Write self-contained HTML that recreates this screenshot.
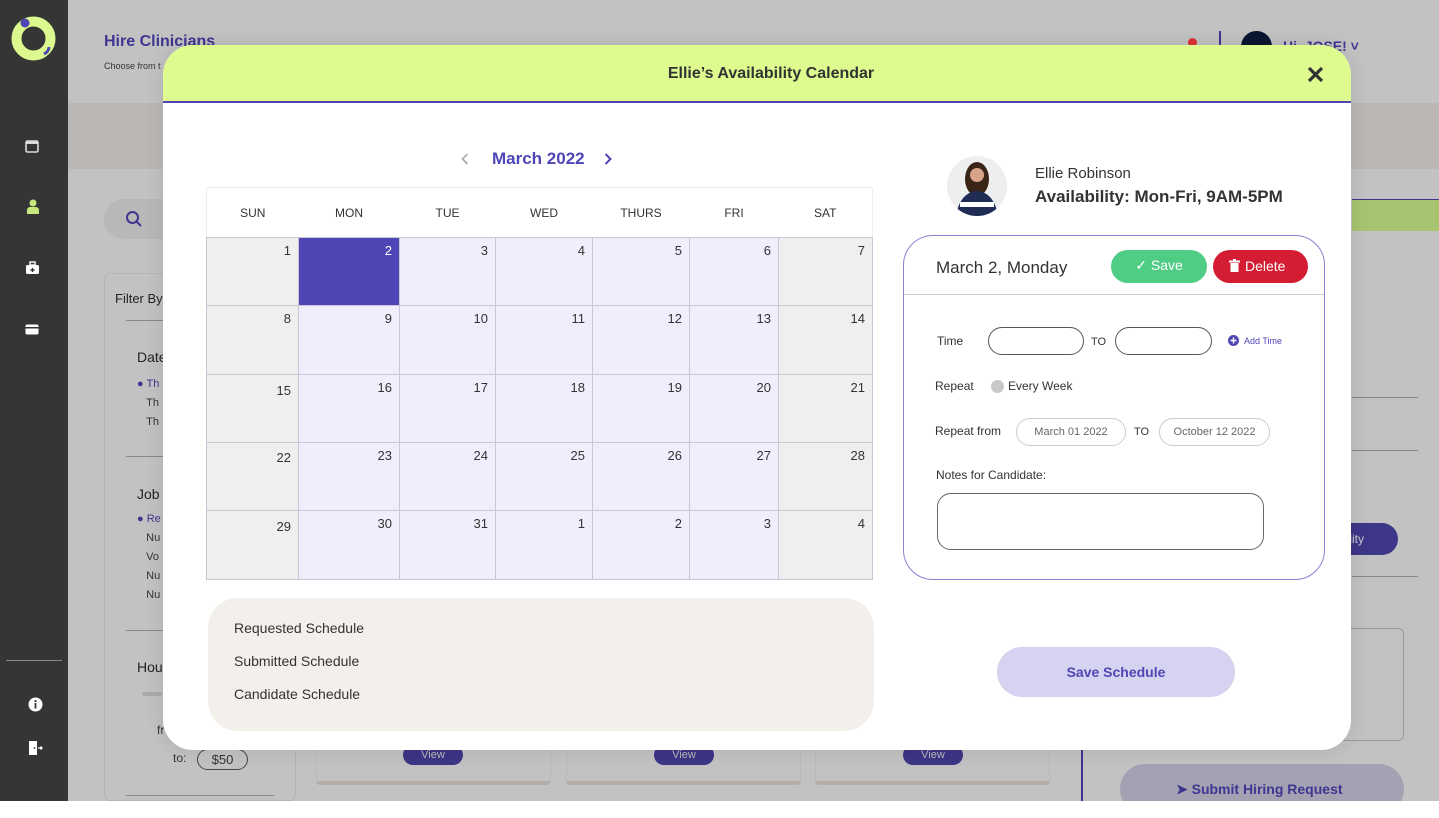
<!DOCTYPE html>
<html><head><meta charset="utf-8"><style>
*{margin:0;padding:0;box-sizing:border-box}
body{width:1439px;height:818px;background:#fff;font-family:"Liberation Sans",sans-serif;position:relative;overflow:hidden;color:#333}
.a{position:absolute}
.bg{left:68px;top:0;width:1371px;height:801px;background:#c2c2c2}
.side{left:0;top:0;width:68px;height:801px;background:#353535}
.cal td{border:1px solid #c9c6d6;vertical-align:top;text-align:right;padding:5px 7px 0 0;font-size:13px;color:#333}
.cal th{font-weight:normal;font-size:12px;color:#333;height:50px;background:#fff}
.g{background:#efefef}.l{background:#f0edfc}
.lbl{font-size:12px;color:#333}
.pill{border:1px solid #555;border-radius:14px;height:28px}
.dp{border:1px solid #ccc;border-radius:14px;height:28px;font-size:11px;color:#666;text-align:center;line-height:26px}
</style></head><body>
<div class="a bg"></div>
<div class="a" style="left:68px;top:103px;width:1371px;height:66px;background:#bbb7b4"></div>
<div class="a" style="left:104px;top:33px;font-size:16px;font-weight:bold;color:#3e3690">Hire Clinicians</div>
<div class="a" style="left:104px;top:61px;font-size:9px;color:#333">Choose from t</div>
<div class="a" style="left:104px;top:199px;width:120px;height:40px;border-radius:20px;background:#b8b8b8"></div>
<svg class="a" style="left:125px;top:210px" width="18" height="18" viewBox="0 0 18 18"><circle cx="7.5" cy="7.5" r="5.5" fill="none" stroke="#3e3690" stroke-width="2"/><path d="M11.5 11.5L16 16" stroke="#3e3690" stroke-width="2"/></svg>
<div class="a" style="left:104px;top:273px;width:192px;height:528px;border:1px solid #b5b5b5;border-radius:6px"></div>
<div class="a" style="left:115px;top:291px;font-size:13px;color:#222">Filter By</div>
<div class="a" style="left:126px;top:320px;width:40px;border-top:1px solid #888"></div>
<div class="a" style="left:137px;top:349px;font-size:14px;color:#222">Date</div>
<div class="a" style="left:137px;top:375px;font-size:11px;color:#3e3690;line-height:19px">● Th<br><span style="color:#333">&nbsp;&nbsp;&nbsp;Th<br>&nbsp;&nbsp;&nbsp;Th</span></div>
<div class="a" style="left:126px;top:456px;width:40px;border-top:1px solid #888"></div>
<div class="a" style="left:137px;top:486px;font-size:14px;color:#222">Job</div>
<div class="a" style="left:137px;top:510px;font-size:11px;color:#3e3690;line-height:19px">● Re<br><span style="color:#333">&nbsp;&nbsp;&nbsp;Nu<br>&nbsp;&nbsp;&nbsp;Vo<br>&nbsp;&nbsp;&nbsp;Nu<br>&nbsp;&nbsp;&nbsp;Nu</span></div>
<div class="a" style="left:126px;top:630px;width:40px;border-top:1px solid #888"></div>
<div class="a" style="left:137px;top:659px;font-size:14px;color:#222">Hou</div>
<div class="a" style="left:142px;top:692px;width:20px;height:4px;border-radius:2px;background:#aaa"></div>
<div class="a" style="left:157px;top:723px;font-size:12px">fr</div>
<div class="a" style="left:173px;top:751px;font-size:12px">to:</div>
<div class="a" style="left:197px;top:749px;width:51px;height:21px;border:1px solid #444;border-radius:11px;font-size:13px;text-align:center;line-height:19px">$50</div>
<div class="a" style="left:126px;top:795px;width:148px;border-top:1px solid #888"></div>
<div class="a" style="left:316px;top:740px;width:235px;height:45px;border:1px solid #b8b8b8;border-radius:4px;border-bottom:4px solid #b4aeab"></div>
<div class="a" style="left:566px;top:740px;width:235px;height:45px;border:1px solid #b8b8b8;border-radius:4px;border-bottom:4px solid #b4aeab"></div>
<div class="a" style="left:815px;top:740px;width:235px;height:45px;border:1px solid #b8b8b8;border-radius:4px;border-bottom:4px solid #b4aeab"></div>
<div class="a" style="left:403px;top:745px;width:60px;height:20px;background:#3d3586;border-radius:10px;color:#bbb;font-size:11px;text-align:center;line-height:20px">View</div>
<div class="a" style="left:654px;top:745px;width:60px;height:20px;background:#3d3586;border-radius:10px;color:#bbb;font-size:11px;text-align:center;line-height:20px">View</div>
<div class="a" style="left:903px;top:745px;width:60px;height:20px;background:#3d3586;border-radius:10px;color:#bbb;font-size:11px;text-align:center;line-height:20px">View</div>
<div class="a" style="left:1081px;top:750px;width:2px;height:51px;background:#3e3690"></div>
<div class="a" style="left:1120px;top:764px;width:284px;height:50px;border-radius:25px;background:#a4a1b3"></div>
<div class="a" style="left:1176px;top:781px;font-size:14px;font-weight:bold;color:#3e3690">➤ Submit Hiring Request</div>
<div class="a" style="left:0;top:801px;width:1439px;height:17px;background:#fff"></div>
<div class="a" style="left:1352px;top:199px;width:87px;height:32px;background:#a6c46f;border-top:1px solid #3e3690"></div>
<div class="a" style="left:1352px;top:397px;width:66px;border-top:1px solid #888"></div>
<div class="a" style="left:1352px;top:450px;width:66px;border-top:1px solid #888"></div>
<div class="a" style="left:1352px;top:576px;width:66px;border-top:1px solid #888"></div>
<div class="a" style="left:1300px;top:523px;width:98px;height:32px;border-radius:16px;background:#3e3688;color:#ccc;font-size:12px;line-height:32px;text-align:right;padding-right:34px">bility</div>
<div class="a" style="left:1340px;top:628px;width:64px;height:113px;border:1px solid #999;border-radius:6px"></div>
<div class="a" style="left:1188px;top:38px;width:9px;height:9px;border-radius:50%;background:#d33"></div>
<div class="a" style="left:1219px;top:31px;width:2px;height:16px;background:#3e3690"></div>
<div class="a" style="left:1241px;top:31px;width:31px;height:31px;border-radius:50%;background:#0a1530"></div>
<div class="a" style="left:1283px;top:38px;font-size:14px;color:#3e3690;font-weight:bold">Hi, JOSE! ˅</div>
<div class="a side"></div>
<svg class="a" style="left:10px;top:15px" width="47" height="47" viewBox="0 0 47 47"><circle cx="23.5" cy="23.5" r="17" fill="none" stroke="#dcf98f" stroke-width="10"/><circle cx="15" cy="8" r="4.5" fill="#4f46b5"/><path d="M39 32a8 8 0 0 1 -5 7" stroke="#4f46b5" stroke-width="3" fill="none"/></svg>
<svg class="a" style="left:25px;top:139px" width="14" height="14" viewBox="0 0 14 14"><rect x="1" y="2" width="12" height="11" rx="1.5" fill="none" stroke="#ddd" stroke-width="1.6"/><rect x="1" y="2" width="12" height="3" fill="#ddd"/></svg>
<svg class="a" style="left:26px;top:199px" width="14" height="15" viewBox="0 0 14 15"><circle cx="7" cy="4" r="3.5" fill="#c8e77c"/><path d="M1 15v-4a3 3 0 0 1 3-3h6a3 3 0 0 1 3 3v4z" fill="#c8e77c"/></svg>
<svg class="a" style="left:25px;top:261px" width="15" height="14" viewBox="0 0 15 14"><rect x="1" y="4" width="13" height="9" rx="1.5" fill="#fff"/><rect x="5" y="1" width="5" height="3" fill="none" stroke="#fff" stroke-width="1.4"/><path d="M7.5 7v4M5.5 9h4" stroke="#353535" stroke-width="1.4"/></svg>
<svg class="a" style="left:25px;top:324px" width="14" height="11" viewBox="0 0 14 11"><rect x="0.5" y="0.5" width="13" height="10" rx="1.5" fill="#fff"/><rect x="0.5" y="3" width="13" height="1.5" fill="#353535"/></svg>
<div class="a" style="left:6px;top:660px;width:56px;border-top:1px solid #888"></div>
<svg class="a" style="left:28px;top:697px" width="15" height="15" viewBox="0 0 15 15"><circle cx="7.5" cy="7.5" r="7" fill="#fff"/><rect x="6.6" y="6" width="1.8" height="5.5" fill="#353535"/><circle cx="7.5" cy="4" r="1.1" fill="#353535"/></svg>
<svg class="a" style="left:28px;top:740px" width="15" height="16" viewBox="0 0 15 16"><rect x="1" y="1" width="8" height="14" fill="#fff"/><circle cx="6.5" cy="8" r="0.9" fill="#353535"/><path d="M10 8h4M12.5 6.5l1.5 1.5-1.5 1.5" stroke="#fff" stroke-width="1.3" fill="none"/></svg>

<!-- modal -->
<div class="a" style="left:163px;top:45px;width:1188px;height:705px;background:#fff;border-radius:30px;overflow:hidden;box-shadow:0 0 20px rgba(0,0,0,.1)">
 <div class="a" style="left:0;top:0;width:1188px;height:58px;background:#ddfb8f;border-bottom:2px solid #4f46b5"></div>
 <div class="a" style="left:0;top:20px;width:1216px;text-align:center;font-size:16px;font-weight:bold;color:#333">Ellie’s Availability Calendar</div>
 <svg class="a" style="left:1144px;top:21px" width="17" height="17" viewBox="0 0 17 17"><path d="M2 2L15 15M15 2L2 15" stroke="#333" stroke-width="3.2"/></svg>
 <svg class="a" style="left:298px;top:108px" width="8" height="12" viewBox="0 0 8 12"><path d="M6.5 1L1.5 6l5 5" stroke="#aaa" stroke-width="1.6" fill="none"/></svg>
 <div class="a" style="left:329px;top:104px;font-size:17px;font-weight:bold;color:#4f46b5">March 2022</div>
 <svg class="a" style="left:441px;top:108px" width="8" height="12" viewBox="0 0 8 12"><path d="M1.5 1l5 5-5 5" stroke="#4f46b5" stroke-width="2" fill="none"/></svg>
</div>
<table class="a cal" style="left:206px;top:187px;width:666px;border-collapse:collapse;table-layout:fixed">
<colgroup><col style="width:92px"><col style="width:101px"><col style="width:96px"><col style="width:97px"><col style="width:97px"><col style="width:89px"><col style="width:94px"></colgroup>
<tr style="border:1px solid #eee"><th>SUN</th><th>MON</th><th>TUE</th><th>WED</th><th>THURS</th><th>FRI</th><th>SAT</th></tr>
<tr style="height:68px"><td class="g">1</td><td style="background:#4f46b5;color:#fff">2</td><td class="l">3</td><td class="l">4</td><td class="l">5</td><td class="l">6</td><td class="g">7</td></tr>
<tr style="height:69px"><td class="g">8</td><td class="l">9</td><td class="l">10</td><td class="l">11</td><td class="l">12</td><td class="l">13</td><td class="g">14</td></tr>
<tr style="height:68px"><td class="g" style="padding-top:8px">15</td><td class="l">16</td><td class="l">17</td><td class="l">18</td><td class="l">19</td><td class="l">20</td><td class="g">21</td></tr>
<tr style="height:68px"><td class="g" style="padding-top:7px">22</td><td class="l">23</td><td class="l">24</td><td class="l">25</td><td class="l">26</td><td class="l">27</td><td class="g">28</td></tr>
<tr style="height:69px"><td class="g" style="padding-top:8px">29</td><td class="l">30</td><td class="l">31</td><td class="l">1</td><td class="l">2</td><td class="l">3</td><td class="g">4</td></tr>
</table>
<div class="a" style="left:208px;top:598px;width:666px;height:133px;background:#f3efeb;border-radius:30px"></div>
<div class="a" style="left:234px;top:612px;font-size:14px;color:#333;line-height:33px">Requested Schedule<br>Submitted Schedule<br>Candidate Schedule</div>

<svg class="a" style="left:946px;top:155px" width="62" height="62" viewBox="0 0 62 62"><defs><clipPath id="c"><circle cx="31" cy="31" r="30"/></clipPath></defs><g clip-path="url(#c)"><rect width="62" height="62" fill="#eee"/><ellipse cx="31" cy="24" rx="12" ry="17" fill="#3a2418"/><circle cx="31" cy="20" r="7" fill="#d9a58a"/><path d="M10 62c2-18 12-26 21-26s19 8 21 26z" fill="#1f2d55"/><rect x="14" y="47" width="34" height="5" fill="#fff"/></g></svg>
<div class="a" style="left:1035px;top:165px;font-size:15px;color:#333">Ellie Robinson</div>
<div class="a" style="left:1035px;top:187px;font-size:17px;color:#333;font-weight:bold">Availability: Mon-Fri, 9AM-5PM</div>

<div class="a" style="left:903px;top:235px;width:422px;height:345px;border:1px solid #8a83d4;border-radius:30px"></div>
<div class="a" style="left:904px;top:294px;width:420px;border-top:1px solid #ccc"></div>
<div class="a" style="left:936px;top:258px;font-size:17px;color:#333">March 2, Monday</div>
<div class="a" style="left:1111px;top:250px;width:96px;height:33px;border-radius:17px;background:#50cd84;color:#fff;font-size:14px;text-align:center;line-height:31px">✓ Save</div>
<div class="a" style="left:1213px;top:250px;width:95px;height:33px;border-radius:17px;background:#d41d33;color:#fff;font-size:14px;line-height:33px;padding-left:16px"><svg width="11" height="13" viewBox="0 0 11 13" style="vertical-align:-1px;margin-right:5px"><rect x="0" y="1.5" width="11" height="2" fill="#fff"/><rect x="4" y="0" width="3" height="2" fill="#fff"/><rect x="1.5" y="4" width="8" height="9" fill="#fff"/></svg>Delete</div>
<div class="a lbl" style="left:937px;top:334px">Time</div>
<div class="a pill" style="left:988px;top:327px;width:96px"></div>
<div class="a lbl" style="left:1091px;top:336px;font-size:11px">TO</div>
<div class="a pill" style="left:1115px;top:327px;width:97px"></div>
<svg class="a" style="left:1228px;top:335px" width="11" height="11"><circle cx="5.5" cy="5.5" r="5.5" fill="#4f46b5"/><path d="M5.5 2.5v6M2.5 5.5h6" stroke="#fff" stroke-width="1.4"/></svg>
<div class="a" style="left:1244px;top:336px;font-size:9px;color:#4f46b5">Add Time</div>
<div class="a lbl" style="left:935px;top:379px">Repeat</div>
<div class="a" style="left:991px;top:380px;width:13px;height:13px;border-radius:50%;background:#c8c8c8"></div>
<div class="a lbl" style="left:1008px;top:379px">Every Week</div>
<div class="a lbl" style="left:935px;top:424px">Repeat from</div>
<div class="a dp" style="left:1016px;top:418px;width:110px">March 01 2022</div>
<div class="a lbl" style="left:1134px;top:426px;font-size:11px">TO</div>
<div class="a dp" style="left:1159px;top:418px;width:111px">October 12 2022</div>
<div class="a lbl" style="left:936px;top:468px;font-size:12px">Notes for Candidate:</div>
<div class="a" style="left:937px;top:493px;width:327px;height:57px;border:1px solid #666;border-radius:14px"></div>
<div class="a" style="left:997px;top:647px;width:238px;height:50px;border-radius:25px;background:#d6d3f0;color:#4f46b5;font-size:14px;font-weight:bold;text-align:center;line-height:50px">Save Schedule</div>
</body></html>
